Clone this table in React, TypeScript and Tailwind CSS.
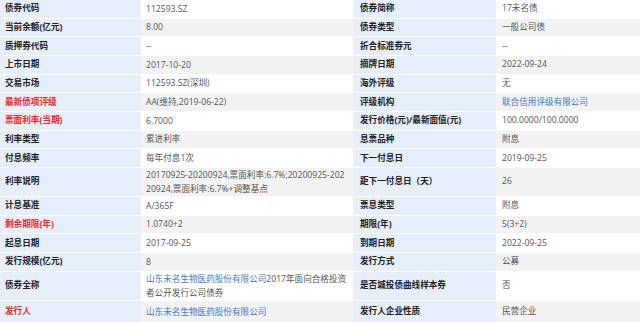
type Row = {
  l1: string;
  v1: React.ReactNode;
  l2: string;
  v2: React.ReactNode;
  red?: boolean;
  tall?: boolean;
  last?: boolean;
};

const Link = ({ children }: { children: React.ReactNode }) => (
  <span className="text-[#3d78c2]">{children}</span>
);

const rows: Row[] = [
  { l1: "债券代码", v1: "112593.SZ", l2: "债券简称", v2: "17未名债" },
  { l1: "当前余额(亿元)", v1: "8.00", l2: "债券类型", v2: "一般公司债" },
  { l1: "质押券代码", v1: "--", l2: "折合标准券元", v2: "--" },
  { l1: "上市日期", v1: "2017-10-20", l2: "摘牌日期", v2: "2022-09-24" },
  { l1: "交易市场", v1: "112593.SZ(深圳)", l2: "海外评级", v2: "无" },
  {
    l1: "最新债项评级",
    v1: "AA(维持,2019-06-22)",
    l2: "评级机构",
    v2: <Link>联合信用评级有限公司</Link>,
    red: true,
  },
  {
    l1: "票面利率(当期)",
    v1: "6.7000",
    l2: "发行价格(元)/最新面值(元)",
    v2: "100.0000/100.0000",
    red: true,
  },
  { l1: "利率类型", v1: "累进利率", l2: "息票品种", v2: "附息" },
  { l1: "付息频率", v1: "每年付息1次", l2: "下一付息日", v2: "2019-09-25" },
  {
    l1: "利率说明",
    v1: (
      <>
        20170925-20200924,票面利率:6.7%;20200925-202
        <br />
        20924,票面利率:6.7%+调整基点
      </>
    ),
    l2: "距下一付息日（天）",
    v2: "26",
    tall: true,
  },
  { l1: "计息基准", v1: "A/365F", l2: "票息类型", v2: "附息" },
  { l1: "剩余期限(年)", v1: "1.0740+2", l2: "期限(年)", v2: "5(3+2)", red: true },
  { l1: "起息日期", v1: "2017-09-25", l2: "到期日期", v2: "2022-09-25" },
  { l1: "发行规模(亿元)", v1: "8", l2: "发行方式", v2: "公募" },
  {
    l1: "债券全称",
    v1: (
      <>
        <Link>山东未名生物医药股份有限公司</Link>2017年面向合格投资
        <br />
        者公开发行公司债券
      </>
    ),
    l2: "是否城投债曲线样本券",
    v2: "否",
    tall: true,
  },
  {
    l1: "发行人",
    v1: <Link>山东未名生物医药股份有限公司</Link>,
    l2: "发行人企业性质",
    v2: "民营企业",
    red: true,
    last: true,
  },
];

function InfoRow({ row, index }: { row: Row; index: number }) {
  const gray = index % 2 === 1;
  const height = row.last ? "h-[23px]" : row.tall ? "h-[29px]" : "h-[18.67px]";
  const valueBg = gray ? "bg-[#f2f2f2]" : "bg-white";

  return (
    <div className={`flex ${height} border-b border-white`}>
      <div
        className={`w-[141px] shrink-0 flex items-center pl-[5px] bg-[#e6eef9] font-bold ${
          row.red ? "text-[#f0262a]" : "text-[#222]"
        }`}
      >
        {row.l1}
      </div>
      <div
        className={`w-[212px] shrink-0 flex items-center pl-[5px] leading-[14px] text-[#555] ${valueBg}`}
      >
        <div>{row.v1}</div>
      </div>
      <div className="w-[143px] shrink-0 flex items-center pl-[7px] bg-[#e6eef9] font-bold text-[#222]">
        {row.l2}
      </div>
      <div className={`flex-1 flex items-center pl-[6px] text-[#555] ${valueBg}`}>
        {row.v2}
      </div>
    </div>
  );
}

export default function App() {
  return (
    <div
      className="w-[640px] h-[322px] overflow-hidden bg-white text-[8.6px] whitespace-nowrap"
      style={{ fontFamily: '"Open Sans", "Noto Sans CJK SC", sans-serif' }}
    >
      {rows.map((row, i) => (
        <InfoRow key={row.l1} row={row} index={i} />
      ))}
    </div>
  );
}
